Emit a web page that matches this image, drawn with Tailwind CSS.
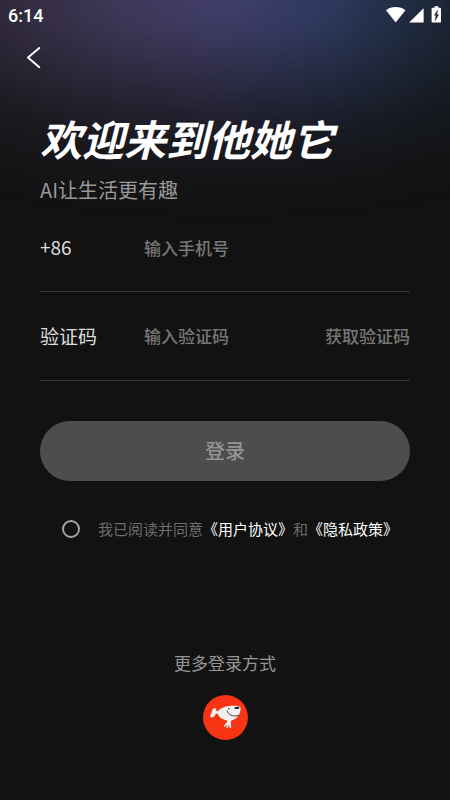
<!DOCTYPE html>
<html lang="zh-CN">
<head>
<meta charset="utf-8">
<meta name="viewport" content="width=device-width, initial-scale=1">
<title>登录</title>
<script src="https://cdn.jsdelivr.net/npm/@tailwindcss/browser@4"></script>
</head>
<body class="bg-[#121212] font-['Noto_Sans_CJK_SC',sans-serif] text-white">
<div class="relative isolate flex min-h-screen flex-col">
  <!-- Ambient glow behind the header -->
  <div aria-hidden="true" class="absolute inset-x-0 top-0 -z-10 h-60 bg-[linear-gradient(to_right,#51446a_0%,#48406a_33%,#42406e_50%,#344270_75%,#263c5c_100%)] [mask-image:radial-gradient(520px_225px_at_50%_-5px,#000_0%,rgb(0_0_0/0.8)_21%,rgb(0_0_0/0.46)_44%,rgb(0_0_0/0.2)_63%,rgb(0_0_0/0.06)_82%,transparent_100%)]"></div>

  <header>
    <div class="flex h-8 items-center justify-between px-2 font-['Roboto',sans-serif]">
      <time class="text-[18px] leading-8 font-medium">6:14</time>
      <div class="flex items-center">
        <svg class="h-8 w-14" viewBox="0 0 56 32" fill="#fff" role="img" aria-label="Wi-Fi、信号和电池状态">
          <path d="M0 10.2C2.6 8.200 6 7 9.700 7s7.100 1.200 9.700 3.200L9.700 22.500z"/>
          <path d="M37.600 8.300v14.200H23.200z"/>
          <path d="M48.500 6.300h3.800v1.500h1.600q1.100 0 1.100 1.100v12.500q0 1.200-1.100 1.200h-7.200q-1.100 0-1.100-1.200V8.900q0-1.100 1.100-1.100h1.800z"/>
          <path d="M51.600 10.300l-3.200 5h1.700l-1 5.400 3.500-5.900h-1.800z" fill="#1d2940" stroke="#1d2940" stroke-width=".5"/>
        </svg>
      </div>
    </div>
    <button type="button" aria-label="返回" class="ml-4 flex h-[52px] w-9 items-center justify-center">
      <svg class="size-6" viewBox="0 0 24 24" fill="none" stroke="#fff" stroke-width="2" stroke-linecap="round" stroke-linejoin="round"><path d="M17.300 2 6 11.500 17.300 21.200"/></svg>
    </button>
  </header>

  <main class="flex flex-1 flex-col px-10 pt-6">
    <h1 class="text-[42px] leading-[60px] font-bold whitespace-nowrap italic">欢迎来到他她它</h1>
    <p class="mt-2 text-[20px] leading-7 text-[#999]">AI让生活更有趣</p>

    <form>
      <div class="flex h-[88px] items-center border-b border-[#363636]">
        <label for="phone" class="w-26 shrink-0 text-[19px] text-[#dedede]">+86</label>
        <input id="phone" type="tel" placeholder="输入手机号" class="min-w-0 flex-1 bg-transparent text-[17px] font-medium outline-none placeholder:text-[#777]">
      </div>
      <div class="flex h-[89px] items-center border-b border-[#363636]">
        <label for="code" class="w-26 shrink-0 text-[19px] text-[#dedede]">验证码</label>
        <input id="code" type="text" inputmode="numeric" placeholder="输入验证码" class="min-w-0 flex-1 bg-transparent text-[17px] font-medium outline-none placeholder:text-[#777]">
        <button type="button" class="shrink-0 text-[17px] font-medium text-[#777]">获取验证码</button>
      </div>
      <button type="submit" disabled class="mt-10 h-[60px] w-full rounded-full bg-[#4d4d4d] text-[20px] font-medium text-[#949494]">登录</button>
      <div class="mt-9 flex items-center justify-center pl-[10px] text-[15px] leading-6 whitespace-nowrap">
        <input id="agree" type="checkbox" class="mr-[18px] size-[18px] shrink-0 appearance-none rounded-full border-2 border-[#a3a3a3] checked:bg-white">
        <p class="text-[#6d6d6d]"><label for="agree">我已阅读并同意</label><a href="#terms" class="text-white">《用户协议》</a>和<a href="#privacy" class="text-white">《隐私政策》</a></p>
      </div>
    </form>

    <section class="mt-auto flex flex-col items-center pb-[60px]">
      <h2 class="text-[17px] leading-7 text-[#969696]">更多登录方式</h2>
      <button type="button" aria-label="京东登录" class="mt-[18px]">
        <svg class="size-[45px]" viewBox="0 0 45 45">
          <circle cx="22.500" cy="22.500" r="22.500" fill="#f73414"/>
          <path fill="#f1f1f1" d="M14.800 16.200C17.500 13 23.500 10.800 30 10.800c2 0 4.300.1 6.300.5 1.200.3 1.500 1.600 1.200 3.600-.7 5.300-3.600 8.800-9.100 10.500l-.5 1.700.3 5.900-1.500.1-.7-3.800-1.300 3.600-1.300-.2.700-3.100-2.600 2.300-.9-.8 3.400-4.100.5-1.400c-4.600-.3-8.700-3.400-9.900-7-.7.3-1.300.3-1.800.2-.7 1.700-1.900 3.700-3.800 3.600-2.300-.2-2.100-2.500-.5-4 .5-2.500 1-5.400 3.300-5.500 1.300 0 2 1.400 1.400 3.200z"/>
          <circle cx="26" cy="13.800" r=".8" fill="#333"/>
          <path d="M31.500 12.400q1.800-1 5-.6l-.6 2q-2.200.5-4.400 0z" fill="#222"/>
          <path d="M24.200 15.800c.5 4 5.600 6.300 11.500 4.600" fill="none" stroke="#333" stroke-width=".9" stroke-linecap="round"/>
        </svg>
      </button>
    </section>
  </main>
</div>
</body>
</html>
